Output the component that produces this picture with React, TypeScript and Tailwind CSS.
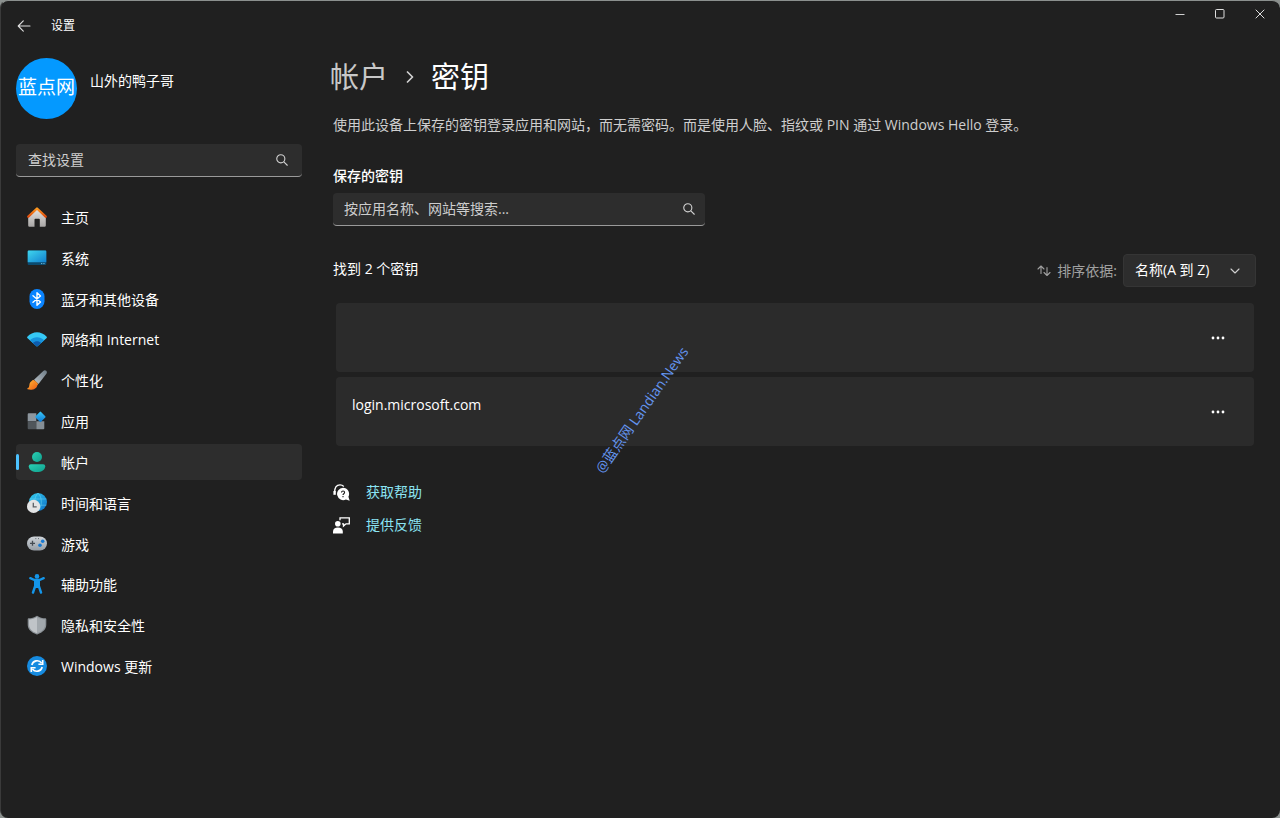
import type { ReactNode } from 'react';

function HomeIcon() {
  return (
    <svg viewBox="0 0 20 20" className="size-5" aria-hidden="true">
      <defs>
        <linearGradient id="home-wall" x1="0" y1="0" x2="0" y2="1">
          <stop offset="0" stopColor="#e4e2e0" />
          <stop offset="1" stopColor="#a8a6a5" />
        </linearGradient>
        <linearGradient id="home-roof" x1="0" y1="0" x2="0" y2="1">
          <stop offset="0" stopColor="#ff9a1f" />
          <stop offset="1" stopColor="#dd4a0c" />
        </linearGradient>
      </defs>
      <path d="M10 2 18.800 10.200V18.600a1.200 1.200 0 0 1-1.200 1.200H12.800V12.500a.8.8 0 0 0-.8-.8H8.300a.8.8 0 0 0-.8.8V19.800H2.400a1.200 1.200 0 0 1-1.200-1.200V10.200Z" fill="url(#home-wall)" />
      <path d="M1.300 9.700 10 1.500l8.700 8.200" fill="none" stroke="url(#home-roof)" strokeWidth="2.300" strokeLinecap="round" strokeLinejoin="round" />
    </svg>
  );
}

function SystemIcon() {
  return (
    <svg viewBox="0 0 20 20" className="size-5" aria-hidden="true">
      <defs>
        <linearGradient id="sys-screen" x1="0" y1="0" x2="1" y2="1">
          <stop offset="0" stopColor="#3fd6ee" />
          <stop offset="1" stopColor="#1280cf" />
        </linearGradient>
      </defs>
      <rect x="0.700" y="2.500" width="18.600" height="14.500" rx="1" fill="#0b4a6e" />
      <path d="M1.700 2.500h16.600a1 1 0 0 1 1 1V14.300H.7V3.500a1 1 0 0 1 1-1Z" fill="url(#sys-screen)" />
      <path d="M14 15.600h1.300M16.300 15.600h1.300" stroke="#7cc3e6" strokeWidth="0.900" />
    </svg>
  );
}

function BluetoothIcon() {
  return (
    <svg viewBox="0 0 20 20" className="size-5" aria-hidden="true">
      <rect x="2.500" y="0" width="15" height="20" rx="7.500" fill="#0a84ff" />
      <path d="m6 6.800 7.500 6.200-3.500 3.200V3.800l3.500 3.200L6 13.200" fill="none" stroke="#fff" strokeWidth="1.400" strokeLinejoin="round" strokeLinecap="round" />
    </svg>
  );
}

function NetworkIcon() {
  return (
    <svg viewBox="0 0 20 20" className="size-5" aria-hidden="true">
      <path d="M.3 7.700C5.600 1.700 14.400 1.700 19.700 7.700c.3.400.3.800 0 1.200l-9 8.200a1 1 0 0 1-1.400 0l-9-8.200c-.3-.4-.3-.8 0-1.200Z" fill="#35c8f5" />
      <path d="M2.800 11.200C7 7.200 13 7.200 17.200 11.200L10.700 17.100a1 1 0 0 1-1.400 0Z" fill="#1793dd" />
      <path d="M5.800 13.900c2.500-2.300 5.900-2.300 8.400 0l-3.500 3.200a1 1 0 0 1-1.400 0Z" fill="#0d5cae" />
    </svg>
  );
}

function BrushIcon() {
  return (
    <svg viewBox="0 0 20 20" className="size-5" aria-hidden="true">
      <defs>
        <linearGradient id="brush-handle" x1="1" y1="0" x2="0" y2="1">
          <stop offset="0" stopColor="#6d7b86" />
          <stop offset="1" stopColor="#b9c2c8" />
        </linearGradient>
        <linearGradient id="brush-tip" x1="0" y1="0" x2="1" y2="1">
          <stop offset="0" stopColor="#ffb636" />
          <stop offset="1" stopColor="#ec5a13" />
        </linearGradient>
      </defs>
      <path d="M19.200.8c1 .9.800 2.100.2 3L11.500 14 7 9.800 16.300.9c.9-.8 2-.9 2.900-.1Z" fill="url(#brush-handle)" />
      <path d="M4.700 11c2.400-1.400 6.100 1 5.600 4.200-.5 3.700-5.300 5.500-9.700 4.100-.5-.2-.5-.7 0-1 1.500-.7 1.500-1.800 1.800-3.500.2-1.700 1-3 2.300-3.800Z" fill="url(#brush-tip)" />
      <path d="M6.500 9.700 11.200 14 10 15.600a5.300 5.300 0 0 0-5.300-4.600Z" fill="#f9932a" />
    </svg>
  );
}

function AppsIcon() {
  return (
    <svg viewBox="0 0 20 20" className="size-5" aria-hidden="true">
      <defs>
        <linearGradient id="apps-gem" x1="0" y1="0" x2="1" y2="1">
          <stop offset="0" stopColor="#3bc9f7" />
          <stop offset="1" stopColor="#0c76d4" />
        </linearGradient>
      </defs>
      <path d="M1.700 2.300h7.600v8H.7v-7a1 1 0 0 1 1-1Z" fill="#8d969e" />
      <path d="M.7 10.300h8.600v8H1.700a1 1 0 0 1-1-1Z" fill="#50565b" />
      <path d="M9.300 10.300h8v7a1 1 0 0 1-1 1h-7Z" fill="#858e95" />
      <rect x="9.500" y="1.900" width="7.800" height="7.800" rx="0.900" transform="rotate(45 13.400 5.800)" fill="url(#apps-gem)" />
    </svg>
  );
}

function AccountIcon() {
  return (
    <svg viewBox="0 0 20 20" className="size-5" aria-hidden="true">
      <defs>
        <linearGradient id="account-body" x1="0" y1="0" x2="1" y2="1">
          <stop offset="0" stopColor="#2ad0b4" />
          <stop offset="1" stopColor="#0f9f8d" />
        </linearGradient>
      </defs>
      <circle cx="10" cy="5" r="5" fill="url(#account-body)" />
      <path d="M3.800 12.200h12.400c1.100 0 2 .9 2 2 0 3.800-3.700 5.800-8.200 5.800s-8.200-2-8.200-5.800c0-1.100.9-2 2-2Z" fill="url(#account-body)" />
    </svg>
  );
}

function TimeIcon() {
  return (
    <svg viewBox="0 0 20 20" className="size-5" aria-hidden="true">
      <defs>
        <linearGradient id="time-globe" x1="0" y1="0" x2="1" y2="1">
          <stop offset="0" stopColor="#35cff0" />
          <stop offset="1" stopColor="#0d70c7" />
        </linearGradient>
      </defs>
      <circle cx="11" cy="9" r="9" fill="url(#time-globe)" />
      <path d="M2.700 6h16.600M8 12.200h11.400M11 0C6.500 4.500 6.500 13.500 11 18M11 0c4.500 4.500 4.500 13.500 0 18" fill="none" stroke="#7fe0f5" strokeWidth="0.700" opacity="0.600" />
      <circle cx="6.600" cy="13.400" r="6.600" fill="#e3e4e5" />
      <path d="M6.300 9.700v4.200h3.400" fill="none" stroke="#5b6065" strokeWidth="1.300" />
    </svg>
  );
}

function GameIcon() {
  return (
    <svg viewBox="0 0 20 20" className="size-5" aria-hidden="true">
      <defs>
        <linearGradient id="game-pad" x1="0" y1="0" x2="0" y2="1">
          <stop offset="0" stopColor="#ced3d8" />
          <stop offset="1" stopColor="#979ea5" />
        </linearGradient>
      </defs>
      <rect x="0" y="2.500" width="20" height="14" rx="7" fill="url(#game-pad)" />
      <path d="M3 9.300h5M5.500 6.800v5" stroke="#454b51" strokeWidth="1.300" />
      <circle cx="15.700" cy="7.300" r="1.800" fill="#1679d2" />
      <circle cx="13" cy="11.300" r="1.800" fill="#1679d2" />
      <path d="M8.300 4.600h1M11 4.600h1" stroke="#646b72" strokeWidth="1" />
    </svg>
  );
}

function AccessibilityIcon() {
  return (
    <svg viewBox="0 0 20 20" className="size-5" aria-hidden="true">
      <circle cx="10" cy="2.400" r="2.300" fill="#1496ea" />
      <path d="M3.300 4.200 7.400 6h5.200l4.100-1.800M8.200 7h3.600v5l2.200 6.500M8.200 7v5L6 18.500" fill="none" stroke="#1496ea" strokeWidth="2.400" strokeLinecap="round" strokeLinejoin="round" />
      <path d="M7.200 6h5.600v8H7.200Z" fill="#1496ea" />
    </svg>
  );
}

function ShieldIcon() {
  return (
    <svg viewBox="0 0 20 20" className="size-5" aria-hidden="true">
      <path d="M9.500.9a.8.800 0 0 1 1 0C12.700 2.500 15.300 3.200 18.400 3.300c.5 0 .9.400.9.900v5.300c0 4.600-3.300 7.900-9 9.900a1 1 0 0 1-.6 0C4 17.400.7 14.100.7 9.500V4.200c0-.5.4-.9.900-.9C4.700 3.200 7.300 2.500 9.500.9Z" fill="#8b9196" />
      <path d="M10 2C7.500 3.500 5 4.300 2 4.500v5c0 4 2.800 6.900 8 8.800Z" fill="#c0c4c8" />
      <path d="M10 2c2.300 1.500 5 2.300 8 2.500v5c0 4-2.800 6.900-8 8.800Z" fill="#a2a8ad" />
    </svg>
  );
}

function UpdateIcon() {
  return (
    <svg viewBox="0 0 20 20" className="size-5" aria-hidden="true">
      <circle cx="10" cy="10" r="10" fill="#168be0" />
      <path d="M4.800 9A5.500 5.500 0 0 1 14.600 7M15.200 11A5.500 5.500 0 0 1 5.400 13" fill="none" stroke="#fff" strokeWidth="1.600" />
      <path d="M15.700 4v4.300h-4.300M4.300 16v-4.300h4.300" fill="none" stroke="#fff" strokeWidth="1.600" />
    </svg>
  );
}

function SearchIcon() {
  return (
    <svg viewBox="0 0 13 13" className="size-3 shrink-0" fill="none" stroke="#d0d0d0" strokeWidth="1.200" strokeLinecap="round" aria-hidden="true">
      <circle cx="5.200" cy="5.200" r="4.400" />
      <path d="m8.500 8.500 3.700 3.700" />
    </svg>
  );
}

function SearchBox({ id, label, placeholder, wide }: { id: string; label?: string; placeholder: string; wide?: boolean }) {
  return (
    <div
      className={
        wide
          ? 'flex h-[33px] items-center rounded-[4px] border-b border-[#9a9a9a] bg-[#2d2d2d] pr-2.5 pl-[11px]'
          : 'flex h-[33px] items-center rounded-[4px] border-b border-[#9a9a9a] bg-[#2d2d2d] pr-3.5 pl-3'
      }
    >
      <input
        id={id}
        type="text"
        aria-label={label}
        placeholder={placeholder}
        className="min-w-0 flex-1 bg-transparent text-[14px] leading-5 text-white outline-none placeholder:text-[#cdcdcd] placeholder:opacity-100"
      />
      <SearchIcon />
    </div>
  );
}

const navItems: { label: string; icon: ReactNode; active?: boolean }[] = [
  { label: '主页', icon: <HomeIcon /> },
  { label: '系统', icon: <SystemIcon /> },
  { label: '蓝牙和其他设备', icon: <BluetoothIcon /> },
  { label: '网络和 Internet', icon: <NetworkIcon /> },
  { label: '个性化', icon: <BrushIcon /> },
  { label: '应用', icon: <AppsIcon /> },
  { label: '帐户', icon: <AccountIcon />, active: true },
  { label: '时间和语言', icon: <TimeIcon /> },
  { label: '游戏', icon: <GameIcon /> },
  { label: '辅助功能', icon: <AccessibilityIcon /> },
  { label: '隐私和安全性', icon: <ShieldIcon /> },
  { label: 'Windows 更新', icon: <UpdateIcon /> },
];

function TitleBar() {
  return (
    <header className="flex h-[49px] items-start justify-between">
      <div className="flex h-[49px] items-center gap-3.5 pl-2.5">
        <button type="button" aria-label="返回" className="flex size-[26px] items-center justify-center">
          <svg viewBox="0 0 14 12" className="h-3 w-3.5" fill="none" stroke="#dedede" strokeWidth="1.100" strokeLinecap="round" strokeLinejoin="round" aria-hidden="true">
            <path d="M13 6H1.300M6.300.9 1.200 6l5.100 5.100" />
          </svg>
        </button>
        <span className="text-[12px] leading-5">设置</span>
      </div>
      <div className="flex">
        <button type="button" aria-label="最小化" className="flex h-[26px] w-10 items-center justify-center">
          <svg viewBox="0 0 10 10" className="size-2.5" aria-hidden="true">
            <path d="M.5 5.500h9" stroke="#cfcfcf" />
          </svg>
        </button>
        <button type="button" aria-label="最大化" className="flex h-[26px] w-10 items-center justify-center">
          <svg viewBox="0 0 10 10" className="size-2.5" aria-hidden="true">
            <rect x="0.500" y="0.500" width="8.500" height="8.500" rx="1" fill="none" stroke="#dedede" />
          </svg>
        </button>
        <button type="button" aria-label="关闭" className="flex h-[26px] w-10 items-center justify-center">
          <svg viewBox="0 0 10 10" className="size-2.5" aria-hidden="true">
            <path d="m.7.7 8.600 8.600M9.300.7.7 9.300" stroke="#dedede" />
          </svg>
        </button>
      </div>
    </header>
  );
}

function Sidebar() {
  return (
    <aside className="w-[286px] shrink-0 pt-2">
      <div className="flex h-[61px] gap-[13px]">
        <div className="flex size-[61px] items-center justify-center rounded-full bg-[#0499ff] text-[19px] leading-5 whitespace-nowrap text-white">
          <span className="pb-1">蓝点网</span>
        </div>
        <span className="pt-[13px] text-[14px] leading-5">山外的鸭子哥</span>
      </div>
      <div className="mt-[25px]">
        <SearchBox id="settings-search" label="查找设置" placeholder="查找设置" />
      </div>
      <nav className="mt-[22px]">
        <ul className="flex min-h-[485px] flex-col justify-between">
          {navItems.map((item) => (
            <li key={item.label}>
              <a
                href="#"
                aria-current={item.active ? 'page' : undefined}
                className={
                  item.active
                    ? 'flex h-9 items-center rounded-[4px] bg-[#2d2d2d] text-[14px] leading-5'
                    : 'flex h-9 items-center rounded-[4px] text-[14px] leading-5'
                }
              >
                <span className={item.active ? 'h-4 w-[3px] rounded-full bg-[#4cc2ff]' : 'h-4 w-[3px]'} />
                <span className="mr-3.5 ml-2">{item.icon}</span>
                <span className="pt-0.5">{item.label}</span>
              </a>
            </li>
          ))}
        </ul>
      </nav>
    </aside>
  );
}

const passkeys = [{ site: '' }, { site: 'login.microsoft.com' }];

function PasskeyRow({ site }: { site: string }) {
  return (
    <li className="flex h-[69px] items-center justify-between rounded-[4px] bg-[#2b2b2b] pr-5 pl-4">
      <span className="pb-[14px] text-[14px] leading-5">{site}</span>
      <button type="button" aria-label="更多选项" className="flex h-8 w-8 items-center justify-center">
        <svg viewBox="0 0 14 4" className="h-1 w-3.5" fill="#fff" aria-hidden="true">
          <circle cx="2" cy="2" r="1.400" />
          <circle cx="7" cy="2" r="1.400" />
          <circle cx="12" cy="2" r="1.400" />
        </svg>
      </button>
    </li>
  );
}

function HelpLinks() {
  return (
    <div className="mt-9 flex flex-col gap-[13px] text-[14px] leading-5 text-[#8be4f3]">
      <a href="#" className="flex items-center gap-4">
        <svg viewBox="0 0 17 17" className="size-[17px]" aria-hidden="true">
          <path d="M1.500 8.500C1.600 3.500 4 .8 7 .8c1.600 0 2.800.6 3.800 1.700" fill="none" stroke="#fff" strokeWidth="1.300" />
          <path d="M.4 7h2.400v3.800H.4Z" fill="#fff" />
          <path d="M10 3.700a6.200 6.200 0 0 1 5.400 9.100l1.300 3.900-3.800-1.200A6.200 6.200 0 1 1 10 3.700Z" fill="#fff" />
          <path d="M8.500 8.500c0-2 3.100-1.900 3.100 0 0 1.200-1.600 1.200-1.600 2.500M10 12v1.200" fill="none" stroke="#202020" strokeWidth="1.100" />
        </svg>
        获取帮助
      </a>
      <a href="#" className="flex items-center gap-4">
        <svg viewBox="0 0 17 17" className="size-[17px]" aria-hidden="true">
          <circle cx="4.800" cy="6.800" r="2.800" fill="#fff" />
          <path d="M0 16.500v-2C0 12 2 10.600 4.900 10.600s4.900 1.400 4.900 3.900v2Z" fill="#fff" />
          <path d="M7 3.300V.8h9.300v6H13l-2.500 2.300V6.800H9" fill="none" stroke="#fff" strokeWidth="1.300" />
        </svg>
        提供反馈
      </a>
    </div>
  );
}

function PasskeysPage() {
  return (
    <main className="relative min-w-0 flex-1 pt-[7px]">
      <h1 className="flex h-10 items-center text-[29px] leading-10">
        <a href="#" className="text-[#c8c8c8]">帐户</a>
        <svg viewBox="0 0 8 12" className="mr-[17px] ml-[18px] h-3 w-2" fill="none" stroke="#d0d0d0" strokeWidth="1.700" strokeLinecap="round" strokeLinejoin="round" aria-hidden="true">
          <path d="m1.500 1 5 5-5 5" />
        </svg>
        密钥
      </h1>
      <div className="pl-[3px]">
        <p className="mt-[18px] text-[14px] leading-5 text-[#cecece]">
          使用此设备上保存的密钥登录应用和网站，而无需密码。而是使用人脸、指纹或 PIN 通过 Windows Hello 登录。
        </p>
        <label htmlFor="passkey-search" className="mt-[31px] block text-[14px] leading-5 font-medium">
          保存的密钥
        </label>
        <div className="mt-[7px] max-w-[372px]">
          <SearchBox id="passkey-search" placeholder="按应用名称、网站等搜索..." wide />
        </div>
        <div className="mt-7 flex h-[33px] items-center justify-between text-[14px] leading-5">
          <span className="pb-[3px]">找到 2 个密钥</span>
          <div className="flex items-center">
            <svg viewBox="0 0 14 12" className="mr-1.5 h-3 w-3.5" fill="none" stroke="#a0a0a0" strokeWidth="1.100" strokeLinecap="round" strokeLinejoin="round" aria-hidden="true">
              <path d="M1 4 4 1l3 3M4 1v7.500M7 7.500l3 3 3-3M10 10.500V2.500" />
            </svg>
            <label htmlFor="sort" className="mr-1.5 text-[#a0a0a0]">排序依据:</label>
            <div className="grid items-center">
              <select id="sort" className="col-start-1 row-start-1 h-[33px] w-[133px] appearance-none rounded-[4px] border border-[#353535] bg-[#2d2d2d] pb-0.5 pl-[11px] text-[14px] text-white">
                <option>名称(A 到 Z)</option>
              </select>
              <svg viewBox="0 0 10 6" className="pointer-events-none col-start-1 row-start-1 mr-4 h-1.5 w-2.5 justify-self-end" fill="none" stroke="#d0d0d0" strokeWidth="1.100" strokeLinecap="round" strokeLinejoin="round" aria-hidden="true">
                <path d="m1 1 4 4 4-4" />
              </svg>
            </div>
          </div>
        </div>
        <ul className="mt-4 mr-0.5 ml-[3px] flex flex-col gap-[5px]">
          {passkeys.map((passkey) => (
            <PasskeyRow key={passkey.site} site={passkey.site} />
          ))}
        </ul>
        <HelpLinks />
      </div>
      <span className="pointer-events-none absolute top-[350px] left-[237px] -rotate-[55deg] text-[14px] leading-5 whitespace-nowrap text-[#6495f0]">
        @蓝点网 Landian.News
      </span>
    </main>
  );
}

export default function App() {
  return (
    <div className="min-h-screen bg-[#8b908e] font-['Open_Sans','Noto_Sans_CJK_SC',sans-serif] text-white">
      <div className="flex min-h-screen flex-col rounded-[8px] border-t border-l border-t-[#8b908e] border-l-[#3a3a3a] bg-[#202020]">
        <TitleBar />
        <div className="flex flex-1 gap-7 pr-6 pl-[15px]">
          <Sidebar />
          <PasskeysPage />
        </div>
      </div>
    </div>
  );
}
